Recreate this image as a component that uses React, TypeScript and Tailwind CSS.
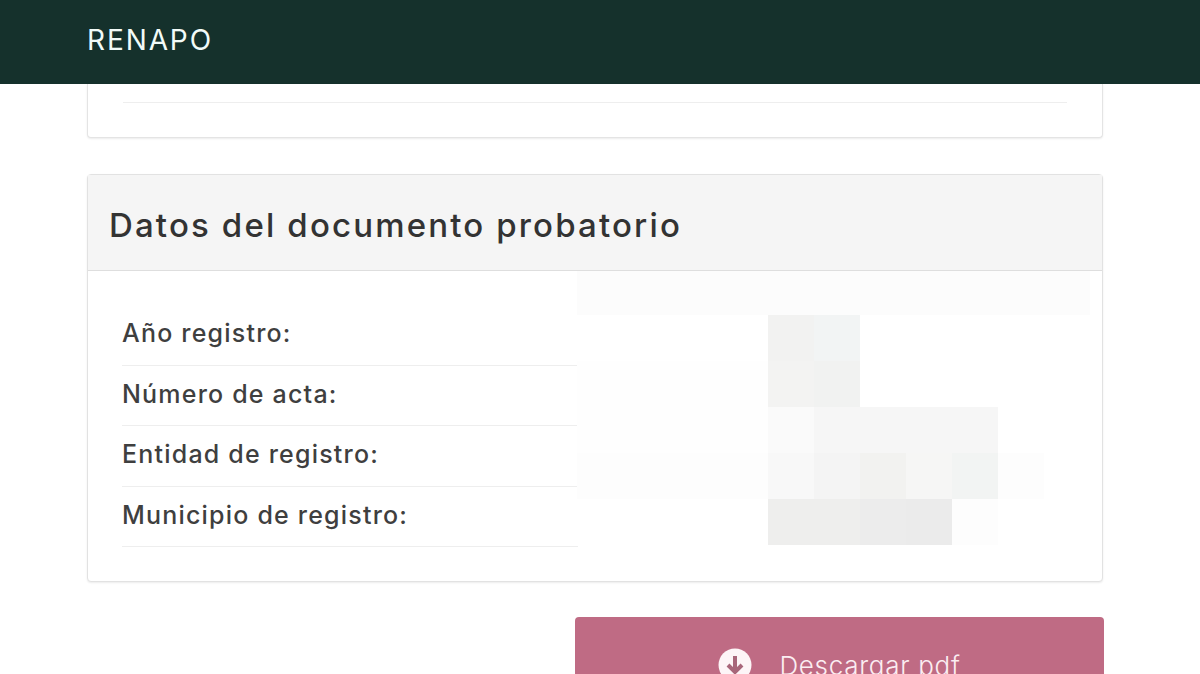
const font = "font-['Inter','Liberation_Sans',sans-serif]";

const rows = ["Año registro:", "Número de acta:", "Entidad de registro:", "Municipio de registro:"];

const mosaicRows = [
  { h: "h-[44px]", cells: [["w-[513px]", "bg-[#fcfcfc]"]] },
  { h: "h-[46px]", cells: [["w-[191px]", "bg-white"], ["w-[46px]", "bg-[#f2f2f1]"], ["w-[46px]", "bg-[#f2f4f4]"]] },
  { h: "h-[46px]", cells: [["w-[191px]", "bg-[#fefefe]"], ["w-[46px]", "bg-[#f3f3f2]"], ["w-[46px]", "bg-[#f1f2f1]"]] },
  { h: "h-[46px]", cells: [["w-[191px]", "bg-[#fefefe]"], ["w-[46px]", "bg-[#fafafa]"], ["w-[184px]", "bg-[#f6f6f6]"]] },
  { h: "h-[46px]", cells: [["w-[191px]", "bg-[#fdfdfd]"], ["w-[46px]", "bg-[#f8f8f8]"], ["w-[46px]", "bg-[#f4f4f4]"], ["w-[46px]", "bg-[#f2f2f0]"], ["w-[46px]", "bg-[#f6f6f5]"], ["w-[46px]", "bg-[#f2f4f3]"], ["w-[46px]", "bg-[#fdfdfd]"]] },
  { h: "h-[46px]", cells: [["w-[191px]", "bg-white"], ["w-[46px]", "bg-[#eeeeed]"], ["w-[46px]", "bg-[#eeeeed]"], ["w-[46px]", "bg-[#ececec]"], ["w-[46px]", "bg-[#ebebeb]"], ["w-[46px]", "bg-[#fdfdfd]"]] },
];

export default function App() {
  return (
    <div className={`h-[674px] w-[1200px] overflow-hidden bg-white ${font}`}>
      <header className="flex h-[84px] items-center bg-[#15312c] pb-[5px] pl-[87px] text-[28px] font-normal tracking-[1.9px] text-[#f2fbf8]">
        RENAPO
      </header>
      <main className="ml-[87px] w-[1016px]">
        <section className="h-[54px] rounded-b border border-t-0 border-[#e4e4e4] bg-white px-[35px] shadow-[0_1px_2px_rgba(0,0,0,0.08)]">
          <div className="h-[19px] border-b border-[#eeeeee]" />
        </section>

        <section className="relative mt-[36px] h-[408px] rounded border border-[#e2e2e2] bg-white shadow-[0_1px_2px_rgba(0,0,0,0.08)]">
          <div className="flex h-[96px] items-center border-b border-[#dedede] bg-[#f5f5f5] pl-[21px] pt-[6px] text-[33px] font-medium tracking-[2.15px] text-[#333333]">
            Datos del documento probatorio
          </div>
          <div className="w-[490px] pl-[34px] pt-[34px]">
            {rows.map((r) => (
              <div key={r} className="flex h-[60.5px] items-center border-b border-[#eeeeee] pb-[2px] text-[25px] font-medium tracking-[1.2px] text-[#3f3f3f]">
                {r}
              </div>
            ))}
          </div>
          <div className="absolute left-[489px] top-[96px]">
            {mosaicRows.map((row, i) => (
              <div key={i} className={`flex ${row.h}`}>
                {row.cells.map(([w, bg], j) => (
                  <div key={j} className={`${w} ${bg}`} />
                ))}
              </div>
            ))}
          </div>
        </section>

        <div className="mt-[35px] flex justify-end">
          <button className="-mr-px flex h-[96px] w-[529px] items-center justify-center gap-[27px] rounded bg-[#bf6b84] text-[26px] font-light tracking-[0.7px] text-[#fbeef2]">
            <svg width="34" height="34" viewBox="0 0 34 34" className="shrink-0">
              <circle cx="17" cy="17" r="16.5" fill="#fdf5f7" />
              <path d="M17 8v16M10 17l7 7 7-7" fill="none" stroke="#a8667a" strokeWidth="4" />
            </svg>
            <span>Descargar pdf</span>
          </button>
        </div>
      </main>
    </div>
  );
}
